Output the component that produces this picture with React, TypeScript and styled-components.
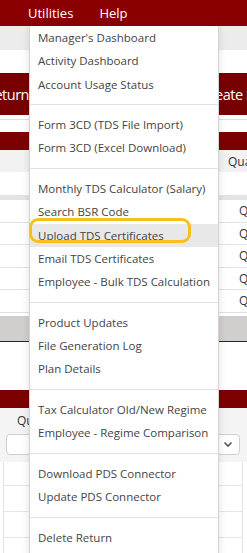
import styled, { createGlobalStyle } from "styled-components";

const GlobalStyle = createGlobalStyle`
    html, body {
        margin: 0;
        padding: 0;
        overflow: hidden;
        background: #fff;
    }
    body {
        font-family: "Open Sans", "Liberation Sans", sans-serif;
    }
`;

const Page = styled.div`
    position: relative;
    width: 247px;
    height: 553px;
    overflow: hidden;
    background: #fff;
`;

const TopNav = styled.div`
    display: flex;
    align-items: center;
    gap: 26px;
    height: 26px;
    padding-left: 28px;
    background: #8a0000;
    color: #fff;
    font-size: 13px;
`;

const NavItem = styled.span`
    white-space: nowrap;
`;

const Toolbar = styled.div`
    height: 24px;
    background: #ececec;
`;

const ActionRow = styled.div`
    display: flex;
    justify-content: space-between;
    margin-top: 23px;
    padding-bottom: 4px;
    border-bottom: 1px solid #e0e0e0;
`;

const ActionButton = styled.div<{ $side: "left" | "right" }>`
    display: flex;
    align-items: center;
    justify-content: ${(p) => (p.$side === "left" ? "flex-end" : "flex-start")};
    height: 42px;
    width: ${(p) => (p.$side === "left" ? "62px" : "120px")};
    margin-left: ${(p) => (p.$side === "left" ? "-33px" : "0")};
    margin-right: ${(p) => (p.$side === "right" ? "-62px" : "0")};
    padding: ${(p) => (p.$side === "left" ? "0" : "0 0 0 12px")};
    box-sizing: border-box;
    background: #760000;
    color: #fff;
    font-size: 14.5px;
    letter-spacing: -0.5px;
    white-space: nowrap;
`;

const Panel = styled.div<{ $top: number }>`
    margin-top: ${(p) => p.$top}px;
`;

const PanelTitle = styled.div`
    height: 18px;
    background: #7c0000;
`;

const TableHead = styled.div`
    display: grid;
    grid-template-columns: 1fr 28px;
    height: 22px;
    align-items: center;
    background: #f2f2f2;
    color: #333;
    font-size: 12px;
`;

const HeadCell = styled.div`
    padding-left: 9px;
    white-space: nowrap;
`;

const FilterRow = styled.div`
    height: 23px;
    border-bottom: 5px solid #e4e4e4;
`;

const Row = styled.div`
    display: grid;
    grid-template-columns: 1fr 28px;
    align-items: center;
    height: 22.5px;
    border-bottom: 1px solid #e3e3e3;
    color: #333;
    font-size: 12px;
    box-sizing: border-box;
`;

const Cell = styled.div`
    padding-left: 20px;
    white-space: nowrap;
`;

const Pager = styled.div`
    margin-top: 3px;
    height: 25px;
    background: #d2cece;
    border-bottom: 1px solid #7c0000;
`;

const FilterArea = styled.div`
    display: flex;
    flex-direction: column;
    gap: 5px;
    padding: 5px 7px 7px 6px;
    background: #f4f4f4;
`;

const Label = styled.div`
    padding-left: 11px;
    color: #333;
    font-size: 12px;
    line-height: 16px;
    white-space: nowrap;
`;

const Select = styled.div`
    display: flex;
    align-items: center;
    justify-content: flex-end;
    height: 21px;
    padding-right: 6px;
    background: #fff;
    border: 1px solid #cfcfcf;
    border-radius: 4px;
    box-sizing: border-box;
`;

const LowerRows = styled.div`
    margin: 0 4px 0 3px;
    border-left: 1px solid #e3e3e3;
    border-right: 1px solid #e3e3e3;
`;

const LowerRow = styled.div`
    height: 25px;
    border-bottom: 1px solid #e6e6e6;
    &:first-child {
        height: 23px;
    }
`;

const Menu = styled.div`
    position: absolute;
    top: 26px;
    left: 29px;
    width: 190px;
    height: 540px;
    box-sizing: border-box;
    background: #fff;
    border: 1px solid #d4d4d4;
    border-top: none;
    box-shadow: 0 3px 8px rgba(0, 0, 0, 0.12);
`;

const MenuItem = styled.div<{ $active?: boolean }>`
    height: 23.3px;
    line-height: 23.3px;
    padding-left: 8px;
    color: #444;
    font-size: 11.5px;
    white-space: nowrap;
    background: ${(p) => (p.$active ? "#e8e8e8" : "transparent")};
`;

const Separator = styled.div`
    height: 1px;
    margin: 8.15px 0;
    background: #e2e2e2;
`;

const Ring = styled.div`
    position: absolute;
    left: -1px;
    top: 192px;
    width: 162px;
    height: 25px;
    box-sizing: border-box;
    border: 3.5px solid #f8c01c;
    border-radius: 9px;
`;

const menuGroups = [
    ["Manager's Dashboard", "Activity Dashboard", "Account Usage Status"],
    ["Form 3CD (TDS File Import)", "Form 3CD (Excel Download)"],
    [
        "Monthly TDS Calculator (Salary)",
        "Search BSR Code",
        "Upload TDS Certificates",
        "Email TDS Certificates",
        "Employee - Bulk TDS Calculation",
    ],
    ["Product Updates", "File Generation Log", "Plan Details"],
    ["Tax Calculator Old/New Regime", "Employee - Regime Comparison"],
    ["Download PDS Connector", "Update PDS Connector"],
    ["Delete Return"],
];

const quarters = ["Q1", "Q2", "Q3", "Q4", "Q1"];

function App() {
    return (
        <Page>
            <GlobalStyle />
            <TopNav>
                <NavItem>Utilities</NavItem>
                <NavItem>Help</NavItem>
            </TopNav>
            <Toolbar />
            <ActionRow>
                <ActionButton $side="left">Return</ActionButton>
                <ActionButton $side="right">Create Return</ActionButton>
            </ActionRow>

            <Panel $top={12}>
                <PanelTitle />
                <TableHead>
                    <div />
                    <HeadCell>Quarter</HeadCell>
                </TableHead>
                <FilterRow />
                {quarters.map((q, i) => (
                    <Row key={i}>
                        <div />
                        <Cell>{q}</Cell>
                    </Row>
                ))}
                <Pager />
            </Panel>

            <Panel $top={48}>
                <PanelTitle />
                <FilterArea>
                    <Label>Quarter</Label>
                    <Select>
                        <svg width="10" height="7" viewBox="0 0 10 7">
                            <polyline
                                points="1.5,1.5 5,5 8.5,1.5"
                                fill="none"
                                stroke="#555"
                                strokeWidth="1.6"
                            />
                        </svg>
                    </Select>
                </FilterArea>
                <LowerRows>
                    <LowerRow />
                    <LowerRow />
                    <LowerRow />
                    <LowerRow />
                </LowerRows>
            </Panel>

            <Menu>
                {menuGroups.map((group, gi) => (
                    <div key={gi}>
                        {gi > 0 && <Separator />}
                        {group.map((label) => (
                            <MenuItem
                                key={label}
                                $active={label === "Upload TDS Certificates"}
                            >
                                {label}
                            </MenuItem>
                        ))}
                    </div>
                ))}
                <Ring />
            </Menu>
        </Page>
    );
}

export default App;
